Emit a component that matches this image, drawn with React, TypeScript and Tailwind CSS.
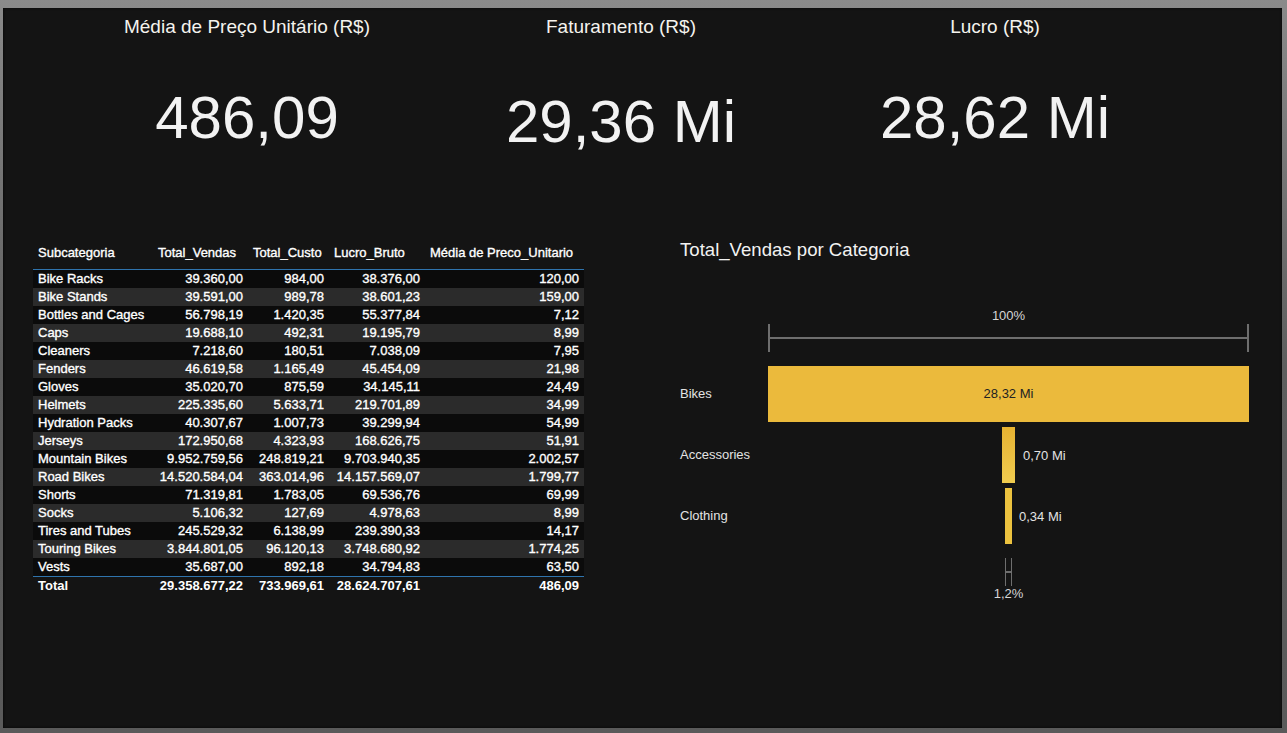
const kpis = [
  { title: "Média de Preço Unitário (R$)", value: "486,09", pad: "pt-0" },
  { title: "Faturamento (R$)", value: "29,36 Mi", pad: "pt-[4px]" },
  { title: "Lucro (R$)", value: "28,62 Mi", pad: "pt-0" },
];

const rows = [
  ["Bike Racks", "39.360,00", "984,00", "38.376,00", "120,00"],
  ["Bike Stands", "39.591,00", "989,78", "38.601,23", "159,00"],
  ["Bottles and Cages", "56.798,19", "1.420,35", "55.377,84", "7,12"],
  ["Caps", "19.688,10", "492,31", "19.195,79", "8,99"],
  ["Cleaners", "7.218,60", "180,51", "7.038,09", "7,95"],
  ["Fenders", "46.619,58", "1.165,49", "45.454,09", "21,98"],
  ["Gloves", "35.020,70", "875,59", "34.145,11", "24,49"],
  ["Helmets", "225.335,60", "5.633,71", "219.701,89", "34,99"],
  ["Hydration Packs", "40.307,67", "1.007,73", "39.299,94", "54,99"],
  ["Jerseys", "172.950,68", "4.323,93", "168.626,75", "51,91"],
  ["Mountain Bikes", "9.952.759,56", "248.819,21", "9.703.940,35", "2.002,57"],
  ["Road Bikes", "14.520.584,04", "363.014,96", "14.157.569,07", "1.799,77"],
  ["Shorts", "71.319,81", "1.783,05", "69.536,76", "69,99"],
  ["Socks", "5.106,32", "127,69", "4.978,63", "8,99"],
  ["Tires and Tubes", "245.529,32", "6.138,99", "239.390,33", "14,17"],
  ["Touring Bikes", "3.844.801,05", "96.120,13", "3.748.680,92", "1.774,25"],
  ["Vests", "35.687,00", "892,18", "34.794,83", "63,50"],
];

const headers = ["Subcategoria", "Total_Vendas", "Total_Custo", "Lucro_Bruto", "Média de Preco_Unitario"];
const totals = ["Total", "29.358.677,22", "733.969,61", "28.624.707,61", "486,09"];

const cols = "grid grid-cols-[120px_95px_81px_96px_159px]";

const Table = () => {
  return (
    <div className="w-[551px] pt-[6px] text-[13px] text-white [-webkit-text-stroke:0.35px_white]">
      <div className={`${cols} border-b border-[#2f74ad] pb-[8px] leading-[16px]`}>
        {headers.map((h) => (
          <div key={h} className="px-[5px] whitespace-nowrap">
            {h}
          </div>
        ))}
      </div>
      {rows.map((r, i) => (
        <div
          key={r[0]}
          className={`${cols} h-[18px] leading-[18px] ${i % 2 === 0 ? "bg-[#0b0b0b]" : "bg-[#2b2b2b]"}`}
        >
          {r.map((c, j) => (
            <div key={j} className={`px-[5px] whitespace-nowrap ${j === 0 ? "text-left" : "text-right"}`}>
              {c}
            </div>
          ))}
        </div>
      ))}
      <div className={`${cols} h-[19px] border-t border-[#2f74ad] font-bold leading-[18px] [-webkit-text-stroke:0px]`}>
        {totals.map((c, j) => (
          <div key={j} className={`px-[5px] whitespace-nowrap ${j === 0 ? "text-left" : "text-right"}`}>
            {c}
          </div>
        ))}
      </div>
    </div>
  );
};

const Funnel = () => {
  return (
    <div className="ml-[96px] w-[569px] text-[13px] text-[#e3e3e3]">
      <div className="text-[18.6px] leading-[22px] text-[#f2f2f2]">Total_Vendas por Categoria</div>
      <div className="ml-[88px] w-[481px]">
        <div className="mt-[47px] text-center leading-[16px] text-[#d6d6d6]">100%</div>
        <div className="flex h-[28px] items-center border-x-2 border-[#6e6e6e]">
          <div className="h-[2px] w-full bg-[#6e6e6e]" />
        </div>
      </div>

      <div className="mt-[14px] flex flex-col gap-[5px]">
        <div className="flex h-[56px] items-center">
          <div className="w-[88px]">Bikes</div>
          <div className="flex h-full w-[481px] items-center justify-center bg-[#ebba3c] text-[#222]">
            28,32 Mi
          </div>
        </div>
        <div className="flex h-[56px] items-center">
          <div className="w-[88px]">Accessories</div>
          <div className="flex h-full w-[481px] justify-center">
            <div className="relative h-full w-[13px] bg-gradient-to-b from-[#e6b231] to-[#f0cc4f]">
              <span className="absolute left-[21px] top-[19px] whitespace-nowrap">0,70 Mi</span>
            </div>
          </div>
        </div>
        <div className="flex h-[56px] items-center">
          <div className="w-[88px]">Clothing</div>
          <div className="flex h-full w-[481px] justify-center">
            <div className="relative h-full w-[7px] bg-[#ecc23f]">
              <span className="absolute left-[14px] top-[19px] whitespace-nowrap">0,34 Mi</span>
            </div>
          </div>
        </div>
      </div>

      <div className="ml-[88px] w-[481px]">
        <div className="mx-auto mt-[14px] flex h-[28px] w-[7px] items-center border-x border-[#6e6e6e]">
          <div className="h-[2px] w-full bg-[#6e6e6e]" />
        </div>
        <div className="mt-[1px] text-center leading-[14px] text-[#d6d6d6]">1,2%</div>
      </div>
    </div>
  );
};

export default function App() {
  return (
    <div
      className="h-[733px] w-[1287px] bg-gradient-to-b from-[#8a8a8a] via-[#5e5e5e] to-[#5a5a5a] pb-[5px] pl-[3px] pr-[5px] pt-[8px]"
      style={{ fontFamily: '"Liberation Sans", Arial, sans-serif' }}
    >
      <div className="h-full w-full bg-[#141414] shadow-[inset_0_0_3px_rgba(0,0,0,0.8)]">
        <div className="flex pl-[57px] pt-[8px]">
          {kpis.map((k) => (
            <div key={k.title} className="flex w-[374px] flex-col items-center">
              <div className="text-[19px] leading-[21px] text-[#f5f3ee]">{k.title}</div>
              <div className={`mt-[51px] ${k.pad} text-[60px] leading-[60px] text-[#f2f2f2]`}>{k.value}</div>
            </div>
          ))}
        </div>

        <div className="mt-[87px] flex items-start pl-[30px]">
          <Table />
          <Funnel />
        </div>
      </div>
    </div>
  );
}
